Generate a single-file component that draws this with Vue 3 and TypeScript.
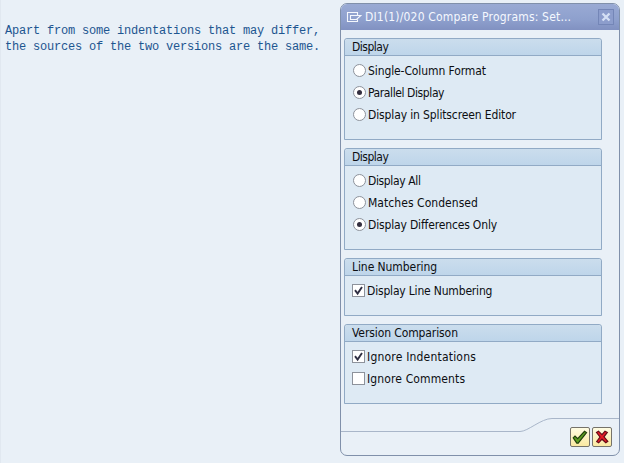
<script setup lang="ts">
import { reactive } from 'vue'

interface Option { label: string; checked: boolean; spacing: string }
interface Group { title: string; kind: 'radio' | 'checkbox'; size: string; spacing: string; options: Option[] }

const groups = reactive<Group[]>([
  {
    title: 'Display', kind: 'radio', size: 'tall', spacing: '-0.5px',
    options: [
      { label: 'Single-Column Format', checked: false, spacing: '-0.1px' },
      { label: 'Parallel Display', checked: true, spacing: '-0.4px' },
      { label: 'Display in Splitscreen Editor', checked: false, spacing: '-0.13px' },
    ],
  },
  {
    title: 'Display', kind: 'radio', size: 'tall', spacing: '-0.5px',
    options: [
      { label: 'Display All', checked: false, spacing: '-0.36px' },
      { label: 'Matches Condensed', checked: false, spacing: '0.05px' },
      { label: 'Display Differences Only', checked: true, spacing: '-0.16px' },
    ],
  },
  {
    title: 'Line Numbering', kind: 'checkbox', size: 'short', spacing: '-0.07px',
    options: [{ label: 'Display Line Numbering', checked: true, spacing: '-0.18px' }],
  },
  {
    title: 'Version Comparison', kind: 'checkbox', size: 'medium', spacing: '-0.1px',
    options: [
      { label: 'Ignore Indentations', checked: true, spacing: '0.2px' },
      { label: 'Ignore Comments', checked: false, spacing: '0.13px' },
    ],
  },
])

function choose(group: Group, option: Option) {
  if (group.kind === 'checkbox') option.checked = !option.checked
  else group.options.forEach((o) => (o.checked = o === option))
}
</script>

<template>
  <main class="screen">
    <p class="message">Apart from some indentations that may differ,<br>the sources of the two versions are the same.</p>
    <section class="dialog">
      <header class="titlebar">
        <svg class="window-icon" width="16" height="13" viewBox="0 0 16 13">
          <path d="M11.5 4V1.5h-10v9h10V8.5M11.5 4.5H4.5v4h6L14.8 4.5h-3.3" fill="none" stroke="#f4f7fd" stroke-width="1.1" />
        </svg>
        <h1>DI1(1)/020 Compare Programs: Set...</h1>
        <button class="close" aria-label="Close">
          <svg width="10" height="10" viewBox="0 0 10 10"><path d="M1.5 1.5l7 7M8.5 1.5l-7 7" stroke="#d5e0f5" stroke-width="2.3" /></svg>
        </button>
      </header>
      <div class="groups">
        <fieldset v-for="(group, i) in groups" :key="i" class="group" :class="group.size">
          <h2 :style="{ letterSpacing: group.spacing }">{{ group.title }}</h2>
          <div
            v-for="option in group.options" :key="option.label" class="option" :class="group.kind"
            @click="choose(group, option)"
          >
            <span class="mark">
              <svg v-if="group.kind === 'checkbox' && option.checked" width="11" height="11" viewBox="0 0 11 11">
                <path d="M2 5.2l2.6 3.4L9 2" fill="none" stroke="#303044" stroke-width="1.9" />
              </svg>
              <i v-else-if="option.checked" class="dot" />
            </span>
            <span class="label" :style="{ letterSpacing: option.spacing }">{{ option.label }}</span>
          </div>
        </fieldset>
      </div>
      <footer class="footer">
        <svg class="curve" width="278" height="16" viewBox="0 0 278 16">
          <path d="M0 14.5H179C187 14.5 200 1.5 211 1.5H278" fill="none" stroke="#a9b6c9" />
        </svg>
        <div class="actions">
          <button aria-label="Continue">
            <svg width="16" height="16" viewBox="0 0 16 16">
              <path d="M1.2 8.8L3 7l2.7 2.7L12.5 2.3l2 1.3L6.2 14.2H4.8z" fill="#5d9d20" stroke="#20400d" stroke-width="1.2" />
            </svg>
          </button>
          <button aria-label="Cancel">
            <svg width="16" height="16" viewBox="0 0 16 16">
              <path d="M2.5 3.5l2-1.3L8 5.7l3-3.5 2.3 1.2L10 7.8l3.8 4.5-2 1.5L8 10.2l-3.3 3.6-2-1.3L6 8z" fill="#e51c24" stroke="#650b17" stroke-width="1.2" />
            </svg>
          </button>
        </div>
      </footer>
    </section>
  </main>
</template>

<style>
body { margin: 0; background: #e9f0f7; }
</style>

<style scoped>
* { box-sizing: border-box; }
.screen {
  display: flex;
  height: 463px;
  padding-top: 3px;
  background: #e9f0f7;
  border-left: 1px solid #e1e8f0;
  overflow: hidden;
  font-family: "DejaVu Sans Condensed", "DejaVu Sans", sans-serif;
  font-stretch: condensed;
  font-size: 12px;
  color: #0c0e12;
}
.message {
  width: 339px;
  flex: none;
  margin: 0;
  padding: 20px 0 0 4px;
  font: 12px/16px "Liberation Mono", monospace;
  letter-spacing: -0.2px;
  color: #1d5590;
  white-space: nowrap;
}
.dialog {
  display: flex;
  flex-direction: column;
  width: 280px;
  height: 453px;
  border: 1px solid #8090aa;
  border-radius: 7px;
  background: #e9f0f7;
  overflow: hidden;
}
.titlebar {
  display: flex;
  flex: none;
  align-items: center;
  height: 26px;
  padding: 0 5px 0 5px;
  background: linear-gradient(#99aad4, #8ea0cd 60%, #8191c1);
}
.window-icon { flex: none; }
h1, h2 { margin: 0; font-size: 12px; font-weight: normal; white-space: nowrap; }
h1 { flex: 1; margin-left: 3px; color: #f5f8fe; letter-spacing: 0.18px; }
.close {
  display: flex;
  align-items: center;
  justify-content: center;
  width: 16px;
  height: 16px;
  padding: 0;
  border: 1px solid #7486b7;
  background: #8c9dcc;
}
.groups {
  display: flex;
  flex-direction: column;
  gap: 8px;
  padding: 8px 0 0 3px;
}
.group {
  width: 258px;
  min-width: 0;
  margin: 0;
  padding: 0;
  border: 1px solid #91aac5;
  border-radius: 3px 3px 0 0;
  background: #deeaf4;
  overflow: hidden;
}
.tall { height: 102px; }
.short { height: 58px; }
.medium { height: 80px; }
h2 {
  height: 17px;
  margin-bottom: 4px;
  padding-left: 7px;
  border-bottom: 1px solid #91aac5;
  background: linear-gradient(#cbdded, #bed5ea);
  line-height: 16px;
}
.option {
  display: flex;
  align-items: center;
  height: 22px;
  padding-left: 8px;
  white-space: nowrap;
}
.mark {
  display: flex;
  align-items: center;
  justify-content: center;
  flex: none;
  width: 13px;
  height: 13px;
  margin-bottom: 2px;
  border: 1px solid #8d929b;
  background: #fff;
}
.radio .mark { border-radius: 50%; }
.checkbox { padding-left: 7px; }
.dot { width: 5px; height: 5px; border-radius: 50%; background: #343040; }
.label { margin-left: 2px; line-height: 16px; }
.footer { display: flex; flex-direction: column; margin-top: 13px; }
.curve { display: block; }
.actions { display: flex; justify-content: flex-end; gap: 2px; margin-top: -6px; padding-right: 7px; }
.actions button {
  display: flex;
  align-items: center;
  justify-content: center;
  width: 20px;
  height: 20px;
  padding: 0;
  border: 1px solid #76736a;
  border-radius: 2px;
  background: linear-gradient(#fffce2, #fae9a2);
}
</style>
